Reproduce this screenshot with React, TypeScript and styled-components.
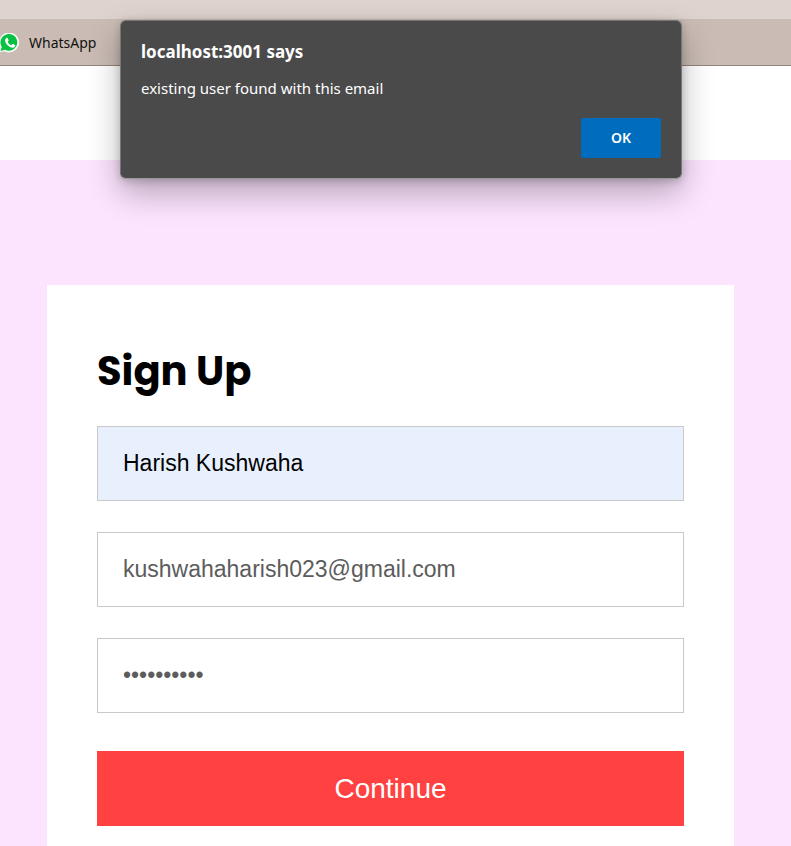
import React, { useState } from "react";
import styled, { createGlobalStyle } from "styled-components";

const uiFont = `"Segoe UI", "Noto Sans", "Open Sans", sans-serif`;

const GlobalStyle = createGlobalStyle`
  *, *::before, *::after { box-sizing: border-box; }
  body { margin: 0; background: #fce3fe; font-family: "Liberation Sans", Arial, sans-serif; }
`;

const Page = styled.div`
  position: relative;
  display: flex;
  flex-direction: column;
  min-height: 100vh;
  overflow: hidden;
  background: #fce3fe;
`;

const AddressStrip = styled.div`
  height: 19px;
  background: #ded3ce;
`;

const BookmarksBar = styled.nav`
  display: flex;
  align-items: center;
  height: 47px;
  padding-top: 2px;
  background: #cabcb4;
  border-bottom: 1px solid #93847d;
`;

const Bookmark = styled.a`
  display: flex;
  align-items: center;
  gap: 9px;
  color: #111;
  font: 14px/20px ${uiFont};
  text-decoration: none;

  svg { display: block; flex: none; }
`;

const SiteHeader = styled.header`
  height: 94px;
  background: #fff;
`;

const Main = styled.main`
  flex: 1;
  display: flex;
  padding: 125px 57px 0 47px;
`;

const SignUpCard = styled.form`
  flex: 1;
  min-width: 0;
  padding: 56px 50px 20px;
  background: #fff;
`;

const Title = styled.h1`
  margin: 0 0 25px;
  color: #000;
  font: 700 40px/60px Poppins, Inter, sans-serif;
`;

const Fields = styled.div`
  display: flex;
  flex-direction: column;
  gap: 31px;
  margin-bottom: 38px;
`;

const Field = styled.input<{ $autofilled?: boolean }>`
  display: block;
  width: 100%;
  height: 75px;
  padding: 0 25px;
  border: 1px solid #c9c9c9;
  border-radius: 0;
  outline: none;
  background: ${(p) => (p.$autofilled ? "#e8f0fe" : "#fff")};
  color: ${(p) => (p.$autofilled ? "#000" : "#5c5c5c")};
  font: 23px "Liberation Sans", Arial, sans-serif;
`;

const ContinueButton = styled.button`
  display: block;
  width: 100%;
  height: 75px;
  border: 0;
  background: #ff4141;
  color: #fff;
  font: 28px "Liberation Sans", Arial, sans-serif;
  cursor: pointer;
`;

const DialogLayer = styled.div`
  position: absolute;
  inset: 0 0 auto;
  padding: 20px 109px 0 120px;
  pointer-events: none;
`;

const Dialog = styled.section`
  display: flex;
  flex-direction: column;
  padding: 19px 20px 20px;
  border: 1px solid #777;
  border-bottom-color: #999;
  border-radius: 6px;
  background: #4a4a4a;
  box-shadow: 0 14px 32px rgba(0, 0, 0, 0.28), 0 2px 8px rgba(0, 0, 0, 0.2);
  color: #fff;
  font-family: ${uiFont};
  pointer-events: auto;
`;

const DialogTitle = styled.h2`
  margin: 0 0 12px;
  font-size: 17px;
  line-height: 24px;
  font-weight: 700;
`;

const DialogText = styled.p`
  margin: 0 0 18px;
  font-size: 15px;
  line-height: 24px;
`;

const OkButton = styled.button`
  align-self: flex-end;
  width: 80px;
  height: 40px;
  padding: 0 0 2px;
  border: 0;
  border-radius: 2px;
  background: #006cbe;
  color: #fff;
  font: 600 14px ${uiFont};
  cursor: pointer;
`;

function WhatsAppIcon() {
  return (
    <svg width="20" height="20" viewBox="0 0 20 20" aria-hidden="true">
      <path d="M-1 19.5 0.4 14.4A10 10 0 1 1 4.3 18.2Z" fill="#f6fbf6" />
      <path d="M0.5 18 1.8 13.9A8.4 8.4 0 1 1 5 16.8Z" fill="#08c143" />
      <path
        d="M6.2 5.2c.5-.5 1.2-.5 1.5.1l.8 1.8c.2.4.1.7-.2 1l-.6.8c.8 1.6 2 2.7 3.7 3.4l.9-1.1c.2-.3.5-.3.9-.2l1.7.9c.4.2.5.4.4.9-.3 1.4-1.5 2.1-2.9 1.9-3.6-.5-6.2-3-7.2-6.2-.4-1.3.2-2.5 1-3.300Z"
        fill="#fff"
      />
    </svg>
  );
}

export default function App() {
  const [name, setName] = useState("Harish Kushwaha");
  const [email, setEmail] = useState("kushwahaharish023@gmail.com");
  const [password, setPassword] = useState("kushwaha23");
  const [alertOpen, setAlertOpen] = useState(true);

  return (
    <Page>
      <GlobalStyle />
      <AddressStrip />
      <BookmarksBar aria-label="Bookmarks">
        <Bookmark href="#whatsapp">
          <WhatsAppIcon />
          WhatsApp
        </Bookmark>
      </BookmarksBar>
      <SiteHeader />
      <Main>
        <SignUpCard
          onSubmit={(e) => {
            e.preventDefault();
            setAlertOpen(true);
          }}
        >
          <Title>Sign Up</Title>
          <Fields>
            <Field
              $autofilled
              type="text"
              aria-label="Your name"
              value={name}
              onChange={(e) => setName(e.target.value)}
            />
            <Field
              type="email"
              aria-label="Email address"
              value={email}
              onChange={(e) => setEmail(e.target.value)}
            />
            <Field
              type="password"
              aria-label="Password"
              value={password}
              onChange={(e) => setPassword(e.target.value)}
            />
          </Fields>
          <ContinueButton type="submit">Continue</ContinueButton>
        </SignUpCard>
      </Main>
      {alertOpen && (
        <DialogLayer>
          <Dialog role="alertdialog" aria-labelledby="alert-title" aria-describedby="alert-text">
            <DialogTitle id="alert-title">localhost:3001 says</DialogTitle>
            <DialogText id="alert-text">existing user found with this email</DialogText>
            <OkButton type="button" onClick={() => setAlertOpen(false)}>
              OK
            </OkButton>
          </Dialog>
        </DialogLayer>
      )}
    </Page>
  );
}
